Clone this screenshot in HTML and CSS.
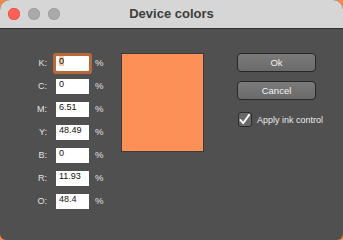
FILE: index.html
```html
<!DOCTYPE html>
<html lang="en">
  <head>
    <meta charset="UTF-8" />
    <title>Device colors</title>
    <link rel="stylesheet" href="styles.css">
  </head>
  <body>
    <div class="window">
      <div class="titlebar">
        <div class="lights">
          <span class="light close"></span>
          <span class="light"></span>
          <span class="light"></span>
        </div>
        <h1 class="title">Device colors</h1>
      </div>

      <div class="content">
        <div class="fields">
          <label>K:</label>
          <div class="field focused"><span class="sel">0</span></div>
          <span class="unit">%</span>

          <label>C:</label>
          <div class="field">0</div>
          <span class="unit">%</span>

          <label>M:</label>
          <div class="field">6.51</div>
          <span class="unit">%</span>

          <label>Y:</label>
          <div class="field">48.49</div>
          <span class="unit">%</span>

          <label>B:</label>
          <div class="field">0</div>
          <span class="unit">%</span>

          <label>R:</label>
          <div class="field">11.93</div>
          <span class="unit">%</span>

          <label>O:</label>
          <div class="field">48.4</div>
          <span class="unit">%</span>
        </div>

        <div class="swatch"></div>

        <div class="actions">
          <button class="btn">Ok</button>
          <button class="btn">Cancel</button>
          <div class="check-row">
            <span class="checkbox">
              <svg width="14" height="15" viewBox="0 0 14 15">
                <path d="M2.5 8 L5.5 11.5 L12 2.5" fill="none" stroke="#fff" stroke-width="2" stroke-linecap="round" stroke-linejoin="round" />
              </svg>
            </span>
            <span class="check-label">Apply ink control</span>
          </div>
        </div>
      </div>
    </div>
  </body>
</html>
```

FILE: styles.css
```css
body {
  margin: 0;
  background: #ef8a4d;
  font-family: "Liberation Sans", Arial, sans-serif;
}

.window {
  width: 343px;
  height: 240px;
  background: #505050;
  border-radius: 10px 10px 6px 6px;
  overflow: hidden;
}

.titlebar {
  position: relative;
  height: 28px;
  background: #d6d6d6;
  border-bottom: 1px solid #2f2f2f;
}

.lights {
  position: absolute;
  left: 8px;
  top: 8px;
  display: flex;
  gap: 8px;
}

.light {
  width: 12px;
  height: 12px;
  border-radius: 50%;
  background: #a9a9a9;
  box-shadow: inset 0 0 0 0.5px #999;
}

.light.close {
  background: #fe5f57;
  box-shadow: inset 0 0 0 0.5px #e0443e;
}

.title {
  margin: 0;
  text-align: center;
  font-size: 13px;
  font-weight: bold;
  line-height: 28px;
  color: #3d3d3d;
}

.content {
  display: flex;
  align-items: flex-start;
  padding: 24px 0 0 28px;
}

.fields {
  display: grid;
  grid-template-columns: 19px 33px 8px;
  grid-auto-rows: 15px;
  column-gap: 9px;
  row-gap: 8px;
  margin-top: 3px;
  align-items: center;
}

.fields label {
  text-align: right;
  font-size: 9px;
  color: #e2e2e2;
  margin-top: -2px;
}

.fields .unit {
  font-size: 9.5px;
  color: #e2e2e2;
  margin: -2px 0 0 -3px;
}

.field {
  height: 15px;
  background: #fff;
  font-size: 9px;
  line-height: 11px;
  padding-left: 3px;
  color: #111;
  box-sizing: border-box;
}

.field.focused {
  box-shadow: 0 0 0 3px #b66a3c;
  border-radius: 1px;
}

.sel {
  background: #f6c9a9;
}

.swatch {
  width: 81px;
  height: 97px;
  margin-left: 15px;
  background: #fd9057;
  border: 1px solid #3c3c3c;
}

.actions {
  display: flex;
  flex-direction: column;
  margin-left: 33px;
}

.btn {
  width: 79px;
  height: 19px;
  margin-bottom: 9px;
  padding: 0;
  background: linear-gradient(#7a7a7a, #6b6b6b);
  border: 1px solid #272727;
  border-radius: 4px;
  color: #f2f2f2;
  font-family: "Liberation Sans", Arial, sans-serif;
  font-size: 9.5px;
  box-sizing: border-box;
}

.check-row {
  display: flex;
  align-items: center;
  gap: 5px;
  margin-top: 3px;
  margin-left: 1px;
}

.checkbox {
  display: flex;
  width: 14px;
  height: 15px;
  background: #696969;
  border: 1px solid #2c2c2c;
  border-radius: 3px;
  box-sizing: border-box;
  overflow: visible;
}

.checkbox svg {
  margin: -1px 0 0 -1px;
}

.check-label {
  font-size: 9px;
  color: #ececec;
}
```
